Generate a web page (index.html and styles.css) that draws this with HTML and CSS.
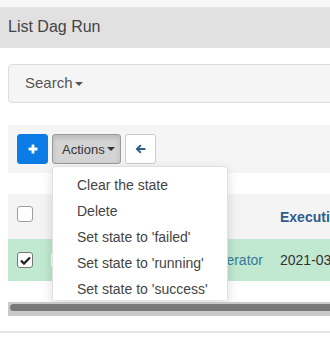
FILE: index.html
```html
<!DOCTYPE html>
<html lang="en">
<head>
    <meta charset="UTF-8">
    <meta name="viewport" content="width=device-width, initial-scale=1.0">
    <title>List Dag Run</title>
    <link rel="stylesheet" href="styles.css">
</head>
<body>
    <div class="topbar"></div>
    <div class="page-title">List Dag Run</div>

    <div class="content">
        <div class="search-panel">
            <span class="search-toggle">Search<span class="caret"></span></span>
        </div>

        <div class="toolbar">
            <button class="btn btn-add" title="Add a new record">
                <svg width="10" height="10" viewBox="0 0 10 10">
                    <rect x="3.6" y="0.5" width="2.8" height="9" rx="0.6" fill="#fff"/>
                    <rect x="0.5" y="3.6" width="9" height="2.8" rx="0.6" fill="#fff"/>
                </svg>
            </button>
            <div class="btn-group">
                <button class="btn btn-actions">Actions<span class="caret"></span></button>
                <ul class="dropdown-menu">
                    <li>Clear the state</li>
                    <li>Delete</li>
                    <li>Set state to 'failed'</li>
                    <li>Set state to 'running'</li>
                    <li>Set state to 'success'</li>
                </ul>
            </div>
            <button class="btn btn-back" title="Back">
                <svg width="11" height="10" viewBox="0 0 11 10">
                    <path d="M5.2 0.6 L6.5 1.9 L4.2 4.1 H10.4 V5.9 H4.2 L6.5 8.1 L5.2 9.4 L0.6 5 Z" fill="#2c5a89"/>
                </svg>
            </button>
        </div>

        <div class="table-wrap">
            <table class="list-table">
                <thead>
                    <tr>
                        <th class="col-check"><span class="checkbox"></span></th>
                        <th class="col-actions"></th>
                        <th class="col-dag">Dag Id</th>
                        <th class="col-exec">Execution Date</th>
                        <th>State</th>
                    </tr>
                </thead>
                <tbody>
                    <tr class="selected">
                        <td class="col-check">
                            <span class="checkbox checked">
                                <svg width="11" height="9" viewBox="0 0 11 9">
                                    <path d="M1 4.6 L4 7.6 L10 1.4" fill="none" stroke="#222" stroke-width="2.2"/>
                                </svg>
                            </span>
                        </td>
                        <td class="col-actions"><span class="row-btn"></span></td>
                        <td class="col-dag"><a href="#">example_bash_operator</a></td>
                        <td class="col-exec">2021-03-01 00:00:00</td>
                        <td>success</td>
                    </tr>
                </tbody>
            </table>
        </div>

        <div class="scrollbar"><div class="scroll-thumb"></div></div>
    </div>

    <div class="footer-line"></div>
</body>
</html>
```

FILE: styles.css
```css
html, body {
    overflow: hidden;
}
body {
    margin: 0;
    font-family: "Liberation Sans", Arial, sans-serif;
    color: #333;
    background: #fff;
}
.topbar {
    height: 7px;
    background: #f7f7f7;
    border-bottom: 1px solid #e4e4e4;
}
.page-title {
    height: 37px;
    line-height: 37px;
    padding: 0 8px 3px;
    font-size: 16px;
    color: #444;
    background: #e1e1e1;
}
.content {
    width: 800px;
    padding: 16px 0 0 8px;
}
.search-panel {
    height: 35px;
    line-height: 35px;
    padding: 0 0 2px 16px;
    border: 1px solid #dcdcdc;
    border-radius: 4px;
    background: #f5f5f5;
    font-size: 15px;
    color: #555;
}
.caret {
    display: inline-block;
    width: 0;
    height: 0;
    margin-left: 2px;
    vertical-align: middle;
    border-top: 4px solid;
    border-left: 4px solid transparent;
    border-right: 4px solid transparent;
}
.toolbar {
    margin-top: 22px;
    height: 30px;
    padding: 9px;
    background: #f5f5f5;
    display: flex;
    gap: 4px;
}
.btn {
    height: 30px;
    padding: 0 9px;
    border: 1px solid #ccc;
    border-radius: 3px;
    background: #fff;
    font-family: inherit;
    font-size: 13px;
    color: #333;
    display: flex;
    align-items: center;
    justify-content: center;
}
.btn-add {
    width: 31px;
    background: #0b7be6;
    border-color: #0b7be6;
}
.btn-back {
    width: 31px;
}
.btn-group {
    position: relative;
}
.btn-actions {
    width: 69px;
    background: #d4d4d4;
    border-color: #9a9a9a;
    box-shadow: inset 0 3px 5px rgba(0, 0, 0, 0.125);
    justify-content: flex-start;
}
.dropdown-menu {
    position: absolute;
    top: 100%;
    left: 0;
    z-index: 10;
    width: 174px;
    height: 128px;
    margin: 2px 0 0;
    padding: 5px 0 0;
    list-style: none;
    overflow: hidden;
    background: #fff;
    border: 1px solid rgba(0, 0, 0, 0.12);
    border-bottom: none;
    border-radius: 4px 4px 0 0;
    box-shadow: 0 4px 12px rgba(0, 0, 0, 0.15);
}
.dropdown-menu li {
    padding: 3px 24px;
    line-height: 20px;
    font-size: 14px;
    color: #444;
    white-space: nowrap;
}
.table-wrap {
    margin-top: 21px;
}
.list-table {
    width: 792px;
    border-collapse: collapse;
    table-layout: fixed;
    font-size: 14px;
}
.list-table th {
    height: 45px;
    padding: 0 8px;
    background: #f4f4f4;
    text-align: left;
    font-weight: bold;
    color: #2f5d8b;
    white-space: nowrap;
    vertical-align: middle;
}
.list-table td {
    height: 42px;
    padding: 0 8px;
    white-space: nowrap;
    vertical-align: middle;
    color: #333;
}
.list-table tr.selected td {
    background: #c1e8d0;
}
.list-table a {
    color: #3a7896;
    text-decoration: none;
}
.col-check {
    width: 18px;
}
.list-table .col-check {
    padding-left: 9px;
}
.col-actions {
    width: 45px;
}
.col-dag {
    width: 152px;
}
.col-exec {
    width: 150px;
}
.checkbox {
    display: flex;
    align-items: center;
    justify-content: center;
    width: 14px;
    height: 14px;
    border: 1px solid #9f9f9f;
    border-radius: 3px;
    background: #fff;
}
th .checkbox {
    margin-top: -5px;
}
.checkbox.checked {
    border-color: #777;
}
.row-btn {
    display: block;
    width: 30px;
    height: 16px;
    background: #fff;
    border-radius: 3px;
}
.scrollbar {
    position: relative;
    z-index: 20;
    width: 792px;
    height: 12px;
    margin-top: 21px;
    padding-top: 2px;
    background: #c9c9c9;
}
.scroll-thumb {
    width: 600px;
    height: 7px;
    margin-left: 2px;
    border-radius: 4px;
    background: #797979;
}
.footer-line {
    height: 2px;
    margin-top: 15px;
    background: #e6e6e6;
}
```
